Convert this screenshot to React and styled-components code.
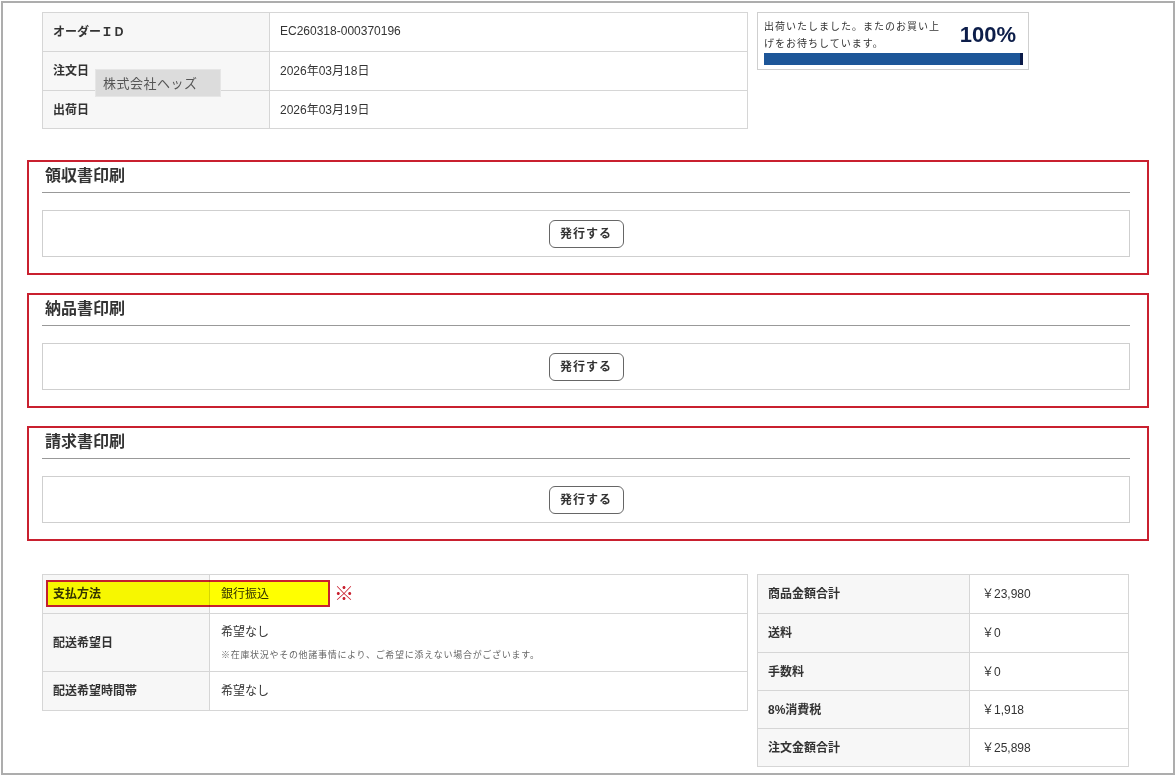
import React from 'react';
import styled, { createGlobalStyle } from 'styled-components';

const GlobalStyle = createGlobalStyle`
  html, body {
    margin: 0;
    padding: 0;
    background: #fff;
  }
  body {
    font-family: "Liberation Sans", "Noto Sans CJK JP", sans-serif;
    color: #333;
    font-size: 12px;
  }
  * {
    box-sizing: border-box;
  }
`;

const Frame = styled.div`
  width: 1174px;
  height: 774px;
  margin: 1px 0 0 1px;
  border: 2px solid #adadad;
  padding: 9px 24px 0 24px;
  overflow: hidden;
`;

const Row = styled.div`
  display: flex;
  align-items: flex-start;
  gap: 9px;
  padding-left: 15px;
  margin-top: ${p => p.$top || 0}px;
`;

const Table = styled.div`
  position: relative;
  width: ${p => p.$width}px;
  border: 1px solid #d6d6d6;
  border-bottom: none;
`;

const Tr = styled.div`
  display: flex;
  min-height: ${p => p.$h || 39}px;
  border-bottom: 1px solid #d6d6d6;
`;

const Th = styled.div`
  flex: 0 0 ${p => p.$w}px;
  display: flex;
  align-items: center;
  padding: 0 0 3px 10px;
  background: #f7f7f7;
  border-right: 1px solid #d6d6d6;
  font-weight: bold;
  color: #333;
`;

const Td = styled.div`
  flex: 1;
  display: flex;
  flex-direction: column;
  justify-content: center;
  padding: 0 0 3px ${p => p.$pad || 10}px;
  color: #333;
`;

const Note = styled.div`
  margin-top: 9px;
  font-size: 9px;
  letter-spacing: 0.7px;
  color: #666;
`;

const Tooltip = styled.div`
  position: absolute;
  left: 52px;
  top: 56px;
  width: 126px;
  height: 28px;
  padding: 0 0 2px 7px;
  display: flex;
  align-items: center;
  background: #dcdcdc;
  border: 1px solid #e6e6e6;
  color: #555;
  font-size: 13px;
  letter-spacing: 0.5px;
`;

const StatusBox = styled.div`
  width: 272px;
  height: 58px;
  border: 1px solid #cfcfcf;
  padding: 5px 5px 0 6px;
`;

const StatusTop = styled.div`
  display: flex;
  justify-content: space-between;
  align-items: center;
`;

const StatusText = styled.div`
  width: 182px;
  font-size: 10px;
  line-height: 17px;
  letter-spacing: 1px;
  color: #333;
`;

const Percent = styled.div`
  font-family: "Liberation Sans", Arial, sans-serif;
  font-weight: bold;
  font-size: 22px;
  color: #0d1e4a;
  padding-right: 7px;
`;

const Bar = styled.div`
  margin-top: 1px;
  height: 12px;
  width: 259px;
  background: #1d5698;
  border-right: 3px solid #0b1a48;
`;

const Section = styled.section`
  border: 2px solid #c9202f;
  padding: 0 17px 16px 13px;
  margin-top: ${p => p.$top || 18}px;
`;

const SectionTitle = styled.h2`
  margin: 0;
  padding: 4px 0 6px 3px;
  font-size: 16px;
  line-height: 20px;
  font-weight: bold;
  color: #333;
  border-bottom: 1px solid #999;
`;

const SectionBody = styled.div`
  margin-top: 17px;
  height: 47px;
  border: 1px solid #cfcfcf;
  display: flex;
  align-items: center;
  justify-content: center;
`;

const IssueButton = styled.button`
  width: 75px;
  height: 28px;
  padding: 0 0 2px;
  border: 1px solid #666;
  border-radius: 6px;
  background: #fff;
  font-family: "Noto Sans CJK JP", sans-serif;
  font-size: 12px;
  font-weight: bold;
  color: #333;
  letter-spacing: 1px;
  cursor: pointer;
`;

const Highlight = styled.div`
  position: absolute;
  left: 3px;
  top: 5px;
  width: 284px;
  height: 27px;
  background: #ffff00;
  border: 2px solid #c9202f;
  mix-blend-mode: multiply;
  pointer-events: none;
`;

const PayValue = styled.div`
  display: flex;
  align-items: center;
`;

const PayText = styled.span`
  width: 113px;
`;

const Mark = styled.span`
  color: #c9202f;
  font-size: 20px;
  line-height: 20px;
  font-family: "Noto Sans CJK JP", sans-serif;
`;

const sections = ['領収書印刷', '納品書印刷', '請求書印刷'];

const totals = [
  ['商品金額合計', '￥23,980', 39],
  ['送料', '￥0', 39],
  ['手数料', '￥0', 38],
  ['8%消費税', '￥1,918', 38],
  ['注文金額合計', '￥25,898', 38],
];

const App = () => {
  return (
    <>
      <GlobalStyle />
      <Frame>
        <Row>
          <Table $width={706}>
            <Tr $h={39}>
              <Th $w={227}>オーダーＩＤ</Th>
              <Td>EC260318-000370196</Td>
            </Tr>
            <Tr $h={39}>
              <Th $w={227}>注文日</Th>
              <Td>2026年03月18日</Td>
            </Tr>
            <Tr $h={38}>
              <Th $w={227}>出荷日</Th>
              <Td>2026年03月19日</Td>
            </Tr>
            <Tooltip>株式会社ヘッズ</Tooltip>
          </Table>
          <StatusBox>
            <StatusTop>
              <StatusText>出荷いたしました。またのお買い上げをお待ちしています。</StatusText>
              <Percent>100%</Percent>
            </StatusTop>
            <Bar />
          </StatusBox>
        </Row>

        {sections.map((title, i) => (
          <Section key={title} $top={i === 0 ? 31 : 18}>
            <SectionTitle>{title}</SectionTitle>
            <SectionBody>
              <IssueButton>発行する</IssueButton>
            </SectionBody>
          </Section>
        ))}

        <Row $top={33}>
          <Table $width={706}>
            <Tr $h={39}>
              <Th $w={167}>支払方法</Th>
              <Td $pad={11}>
                <PayValue>
                  <PayText>銀行振込</PayText>
                  <Mark>※</Mark>
                </PayValue>
              </Td>
            </Tr>
            <Tr $h={58}>
              <Th $w={167}>配送希望日</Th>
              <Td $pad={11}>
                <div>希望なし</div>
                <Note>※在庫状況やその他諸事情により、ご希望に添えない場合がございます。</Note>
              </Td>
            </Tr>
            <Tr $h={39}>
              <Th $w={167}>配送希望時間帯</Th>
              <Td $pad={11}>希望なし</Td>
            </Tr>
            <Highlight />
          </Table>
          <Table $width={372}>
            {totals.map(([label, value, h]) => (
              <Tr key={label} $h={h}>
                <Th $w={212}>{label}</Th>
                <Td $pad={12}>{value}</Td>
              </Tr>
            ))}
          </Table>
        </Row>
      </Frame>
    </>
  );
};

export default App;
